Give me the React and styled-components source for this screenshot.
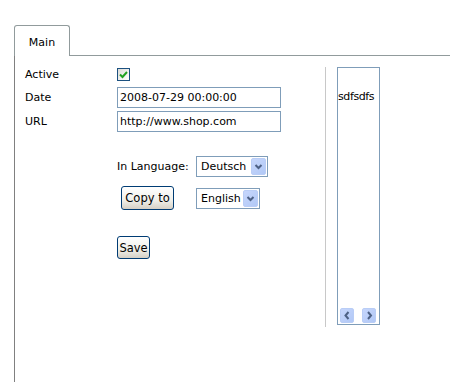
import React from 'react';
import styled, { createGlobalStyle } from 'styled-components';

const GlobalStyle = createGlobalStyle`
  body {
    margin: 0;
    background: #fff;
    font-family: 'DejaVu Sans', Verdana, sans-serif;
    font-size: 11px;
    color: #000;
  }
`;

const StPage = styled.div`
  box-sizing: border-box;
  height: 382px;
  padding: 25px 0 0 14px;
  display: flex;
  flex-direction: column;
`;

const StTabStrip = styled.div`
  display: flex;
  height: 31px;
`;

const StTab = styled.div`
  box-sizing: border-box;
  width: 56px;
  border: 1px solid #919b9c;
  border-bottom: none;
  border-radius: 3px 3px 0 0;
  display: flex;
  align-items: center;
  justify-content: center;
  padding-top: 2px;
`;

const StTabFill = styled.div`
  flex: 1;
  border-bottom: 1px solid #919b9c;
`;

const StPanel = styled.div`
  flex: 1;
  display: flex;
  border-left: 1px solid #808080;
  padding-left: 10px;
`;

const StForm = styled.div`
  width: 300px;
  padding-top: 12px;
  display: flex;
  flex-direction: column;
`;

const StFieldRow = styled.div`
  display: grid;
  grid-template-columns: 92px auto;
  align-items: center;
  margin-top: ${({ gap }) => gap || 0}px;
`;

const StLabel = styled.span`
  line-height: 13px;
`;

const StCheckbox = styled.span`
  box-sizing: border-box;
  width: 13px;
  height: 13px;
  border: 1px solid #1c5180;
  background: linear-gradient(135deg, #dcdcd7, #fff);
  display: flex;
  align-items: center;
  justify-content: center;
`;

const StInput = styled.div`
  box-sizing: border-box;
  width: 164px;
  height: 21px;
  border: 1px solid #7f9db9;
  padding: 0 2px;
  display: flex;
  align-items: center;
  white-space: nowrap;
`;

const StLangRow = styled.div`
  display: grid;
  grid-template-columns: 79px auto;
  align-items: center;
  margin-left: 92px;
  margin-top: ${({ gap }) => gap || 0}px;
`;

const StSelect = styled.div`
  box-sizing: border-box;
  width: ${({ width }) => width}px;
  height: 21px;
  border: 1px solid #7f9db9;
  display: flex;
  align-items: center;
  justify-content: space-between;
  padding: 1px 1px 1px 4px;
`;

const StArrowButton = styled.span`
  box-sizing: border-box;
  width: 15px;
  height: 17px;
  border: 1px solid #b9cdf6;
  border-radius: 2px;
  background: linear-gradient(135deg, #c6d6fc, #b1c8f6);
  display: flex;
  align-items: center;
  justify-content: center;
`;

const StButton = styled.button`
  box-sizing: border-box;
  height: ${({ height }) => height || 24}px;
  width: ${({ width }) => width}px;
  margin-left: ${({ indent }) => indent || 0}px;
  border: 1px solid #003c74;
  border-radius: 3px;
  background: linear-gradient(#fff, #f0f0ea 60%, #d6d0c5);
  font-family: 'DejaVu Sans', Verdana, sans-serif;
  font-size: 11.5px;
  color: #000;
  padding: 0;
`;

const StDivider = styled.div`
  align-self: flex-start;
  margin-top: 11px;
  height: 260px;
  border-left: 1px solid #c8c8c8;
`;

const StListBox = styled.div`
  box-sizing: border-box;
  align-self: flex-start;
  margin: 11px 0 0 11px;
  width: 43px;
  height: 258px;
  border: 1px solid #7f9db9;
  display: flex;
  flex-direction: column;
  overflow: hidden;
`;

const StListText = styled.span`
  padding-top: 22px;
  line-height: 14px;
  white-space: nowrap;
  letter-spacing: -0.4px;
`;

const StScrollRow = styled.div`
  margin-top: auto;
  display: flex;
  justify-content: space-between;
  padding: 0 3px 1px 2px;
`;

const StScrollButton = styled(StArrowButton)`
  width: 14px;
  height: 15px;
`;

const Chevron = ({ dir }) => {
  const paths = {
    down: 'M1.5 3 L4.5 6 L7.5 3',
    left: 'M5.5 1 L2.5 4.5 L5.5 8',
    right: 'M3 1 L6 4.5 L3 8',
  };
  return (
    <svg width="9" height="9" viewBox="0 0 9 9">
      <path d={paths[dir]} fill="none" stroke="#4d6185" strokeWidth="2" />
    </svg>
  );
};

const Select = ({ value, width }) => (
  <StSelect width={width}>
    <span>{value}</span>
    <StArrowButton>
      <Chevron dir="down" />
    </StArrowButton>
  </StSelect>
);

const App = () => (
  <>
    <GlobalStyle />
    <StPage>
      <StTabStrip>
        <StTab>Main</StTab>
        <StTabFill />
      </StTabStrip>
      <StPanel>
        <StForm>
          <StFieldRow>
            <StLabel>Active</StLabel>
            <StCheckbox>
              <svg width="9" height="9" viewBox="0 0 9 9">
                <path d="M1 4.5 L3.5 7 L8 2" fill="none" stroke="#21a121" strokeWidth="2" />
              </svg>
            </StCheckbox>
          </StFieldRow>
          <StFieldRow gap={6}>
            <StLabel>Date</StLabel>
            <StInput>2008-07-29 00:00:00</StInput>
          </StFieldRow>
          <StFieldRow gap={3}>
            <StLabel>URL</StLabel>
            <StInput>http://www.shop.com</StInput>
          </StFieldRow>
          <StLangRow gap={24}>
            <span>In Language:</span>
            <Select value="Deutsch" width={72} />
          </StLangRow>
          <StLangRow gap={9}>
            <StButton indent={4} width={53}>
              Copy to
            </StButton>
            <Select value="English" width={64} />
          </StLangRow>
          <StLangRow gap={26}>
            <StButton width={33} height={23}>
              Save
            </StButton>
          </StLangRow>
        </StForm>
        <StDivider />
        <StListBox>
          <StListText>sdfsdfs</StListText>
          <StScrollRow>
            <StScrollButton>
              <Chevron dir="left" />
            </StScrollButton>
            <StScrollButton>
              <Chevron dir="right" />
            </StScrollButton>
          </StScrollRow>
        </StListBox>
      </StPanel>
    </StPage>
  </>
);

export default App;
